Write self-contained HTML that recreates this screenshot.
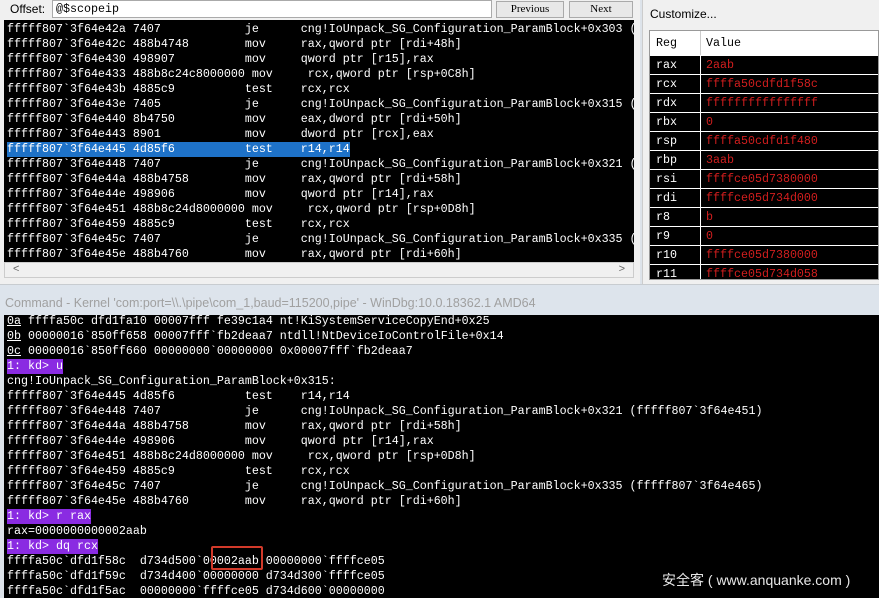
<!DOCTYPE html>
<html><head><style>
*{margin:0;padding:0;box-sizing:border-box}
body{width:879px;height:598px;overflow:hidden;background:#dde3ea;position:relative;font-family:"Liberation Mono",monospace}
.abs{position:absolute}
pre{font-family:"Liberation Mono","DejaVu Sans Mono",monospace;font-size:11.67px;line-height:15px;color:#fff;white-space:pre}
.hl{background:#1e72c8;display:inline-block}
.kd{background:#8a2be2;display:inline-block}
.regrow{position:absolute;left:0;width:230px;height:19px;border-top:1px solid #fff;font-size:11.67px;line-height:18px}
.regrow .n{position:absolute;left:6px;color:#fff}
.regrow .v{position:absolute;left:56px;color:#d21e1e}
.regrow .d{position:absolute;left:50px;top:0;width:1px;height:19px;background:#fff}
</style></head><body>
<div class="abs" style="left:0;top:0;width:640px;height:284px;background:#f0f0f0"></div>
<div class="abs" style="left:10px;top:2px;font-family:'Liberation Sans',sans-serif;font-size:12px;color:#000">Offset:</div>
<div class="abs" style="left:52px;top:0;width:440px;height:18px;background:#fff;border:1px solid #aaa;font-size:11.67px;padding:1px 3px">@$scopeip</div>
<div class="abs" style="left:496px;top:1px;width:68px;height:17px;background:#e8e8e8;border:1px solid #aaa;font-family:'Liberation Serif',serif;font-size:11px;text-align:center;line-height:15px">Previous</div>
<div class="abs" style="left:569px;top:1px;width:64px;height:17px;background:#e8e8e8;border:1px solid #aaa;font-family:'Liberation Serif',serif;font-size:11px;text-align:center;line-height:15px">Next</div>
<div class="abs" style="left:4px;top:20px;width:630px;height:242px;background:#000;overflow:hidden">
<pre style="padding:2px 0 0 3px">fffff807`3f64e42a 7407            je      cng!IoUnpack_SG_Configuration_ParamBlock+0x303 (
fffff807`3f64e42c 488b4748        mov     rax,qword ptr [rdi+48h]
fffff807`3f64e430 498907          mov     qword ptr [r15],rax
fffff807`3f64e433 488b8c24c8000000 mov     rcx,qword ptr [rsp+0C8h]
fffff807`3f64e43b 4885c9          test    rcx,rcx
fffff807`3f64e43e 7405            je      cng!IoUnpack_SG_Configuration_ParamBlock+0x315 (
fffff807`3f64e440 8b4750          mov     eax,dword ptr [rdi+50h]
fffff807`3f64e443 8901            mov     dword ptr [rcx],eax
<span class="hl">fffff807`3f64e445 4d85f6          test    r14,r14</span>
fffff807`3f64e448 7407            je      cng!IoUnpack_SG_Configuration_ParamBlock+0x321 (
fffff807`3f64e44a 488b4758        mov     rax,qword ptr [rdi+58h]
fffff807`3f64e44e 498906          mov     qword ptr [r14],rax
fffff807`3f64e451 488b8c24d8000000 mov     rcx,qword ptr [rsp+0D8h]
fffff807`3f64e459 4885c9          test    rcx,rcx
fffff807`3f64e45c 7407            je      cng!IoUnpack_SG_Configuration_ParamBlock+0x335 (
fffff807`3f64e45e 488b4760        mov     rax,qword ptr [rdi+60h]</pre>
</div>
<div class="abs" style="left:4px;top:262px;width:630px;height:16px;background:#f0f0f0;border:1px solid #ccc;font-family:'Liberation Sans';font-size:11px;color:#666">
<span style="position:absolute;left:8px;top:0">&lt;</span><span style="position:absolute;right:8px;top:0">&gt;</span></div>
<div class="abs" style="left:642px;top:0;width:237px;height:284px;background:#f0f0f0;border-left:1px solid #ccc"></div>
<div class="abs" style="left:650px;top:7px;font-family:'Liberation Sans',sans-serif;font-size:12px">Customize...</div>
<div class="abs" style="left:649px;top:30px;width:230px;height:250px;background:#000;overflow:hidden;border:1px solid #999">
<div class="abs" style="left:0;top:0;width:230px;height:24px;background:#fff;font-size:11.67px;line-height:24px">
<span style="position:absolute;left:6px">Reg</span><span style="position:absolute;left:50px;top:0;width:1px;height:24px;background:#ccc"></span><span style="position:absolute;left:56px">Value</span></div>
<div class="regrow" style="top:24px"><span class="n">rax</span><span class="d"></span><span class="v">2aab</span></div>
<div class="regrow" style="top:43px"><span class="n">rcx</span><span class="d"></span><span class="v">ffffa50cdfd1f58c</span></div>
<div class="regrow" style="top:62px"><span class="n">rdx</span><span class="d"></span><span class="v">ffffffffffffffff</span></div>
<div class="regrow" style="top:81px"><span class="n">rbx</span><span class="d"></span><span class="v">0</span></div>
<div class="regrow" style="top:100px"><span class="n">rsp</span><span class="d"></span><span class="v">ffffa50cdfd1f480</span></div>
<div class="regrow" style="top:119px"><span class="n">rbp</span><span class="d"></span><span class="v">3aab</span></div>
<div class="regrow" style="top:138px"><span class="n">rsi</span><span class="d"></span><span class="v">ffffce05d7380000</span></div>
<div class="regrow" style="top:157px"><span class="n">rdi</span><span class="d"></span><span class="v">ffffce05d734d000</span></div>
<div class="regrow" style="top:176px"><span class="n">r8</span><span class="d"></span><span class="v">b</span></div>
<div class="regrow" style="top:195px"><span class="n">r9</span><span class="d"></span><span class="v">0</span></div>
<div class="regrow" style="top:214px"><span class="n">r10</span><span class="d"></span><span class="v">ffffce05d7380000</span></div>
<div class="regrow" style="top:233px"><span class="n">r11</span><span class="d"></span><span class="v">ffffce05d734d058</span></div>
</div>
<div class="abs" style="left:0;top:284px;width:879px;height:32px;background:#dde4ec;border-top:1px solid #c8ccd0"></div>
<div class="abs" style="left:5px;top:296px;font-family:'Liberation Sans',sans-serif;font-size:12.5px;color:#a0a0a0">Command - Kernel 'com:port=\\.\pipe\com_1,baud=115200,pipe' - WinDbg:10.0.18362.1 AMD64</div>
<div class="abs" style="left:4px;top:315px;width:875px;height:283px;background:#000;overflow:hidden">
<pre style="margin-top:-1px;padding-left:3px"><u>0a</u> ffffa50c dfd1fa10 00007fff fe39c1a4 nt!KiSystemServiceCopyEnd+0x25
<u>0b</u> 00000016`850ff658 00007fff`fb2deaa7 ntdll!NtDeviceIoControlFile+0x14
<u>0c</u> 00000016`850ff660 00000000`00000000 0x00007fff`fb2deaa7
<span class="kd">1: kd&gt; u</span>
cng!IoUnpack_SG_Configuration_ParamBlock+0x315:
fffff807`3f64e445 4d85f6          test    r14,r14
fffff807`3f64e448 7407            je      cng!IoUnpack_SG_Configuration_ParamBlock+0x321 (fffff807`3f64e451)
fffff807`3f64e44a 488b4758        mov     rax,qword ptr [rdi+58h]
fffff807`3f64e44e 498906          mov     qword ptr [r14],rax
fffff807`3f64e451 488b8c24d8000000 mov     rcx,qword ptr [rsp+0D8h]
fffff807`3f64e459 4885c9          test    rcx,rcx
fffff807`3f64e45c 7407            je      cng!IoUnpack_SG_Configuration_ParamBlock+0x335 (fffff807`3f64e465)
fffff807`3f64e45e 488b4760        mov     rax,qword ptr [rdi+60h]
<span class="kd">1: kd&gt; r rax</span>
rax=0000000000002aab
<span class="kd">1: kd&gt; dq rcx</span>
ffffa50c`dfd1f58c  d734d500`00002aab 00000000`ffffce05
ffffa50c`dfd1f59c  d734d400`00000000 d734d300`ffffce05
ffffa50c`dfd1f5ac  00000000`ffffce05 d734d600`00000000</pre>
</div>
<div class="abs" style="left:211px;top:546px;width:52px;height:24px;border:2px solid #d23a2a;border-radius:2px"></div>
<div class="abs" style="left:662px;top:570px;font-family:'Liberation Sans','Noto Sans CJK SC',sans-serif;font-size:14px;color:#e8e8e8;white-space:nowrap">安全客 ( www.anquanke.com )</div>
</body></html>
